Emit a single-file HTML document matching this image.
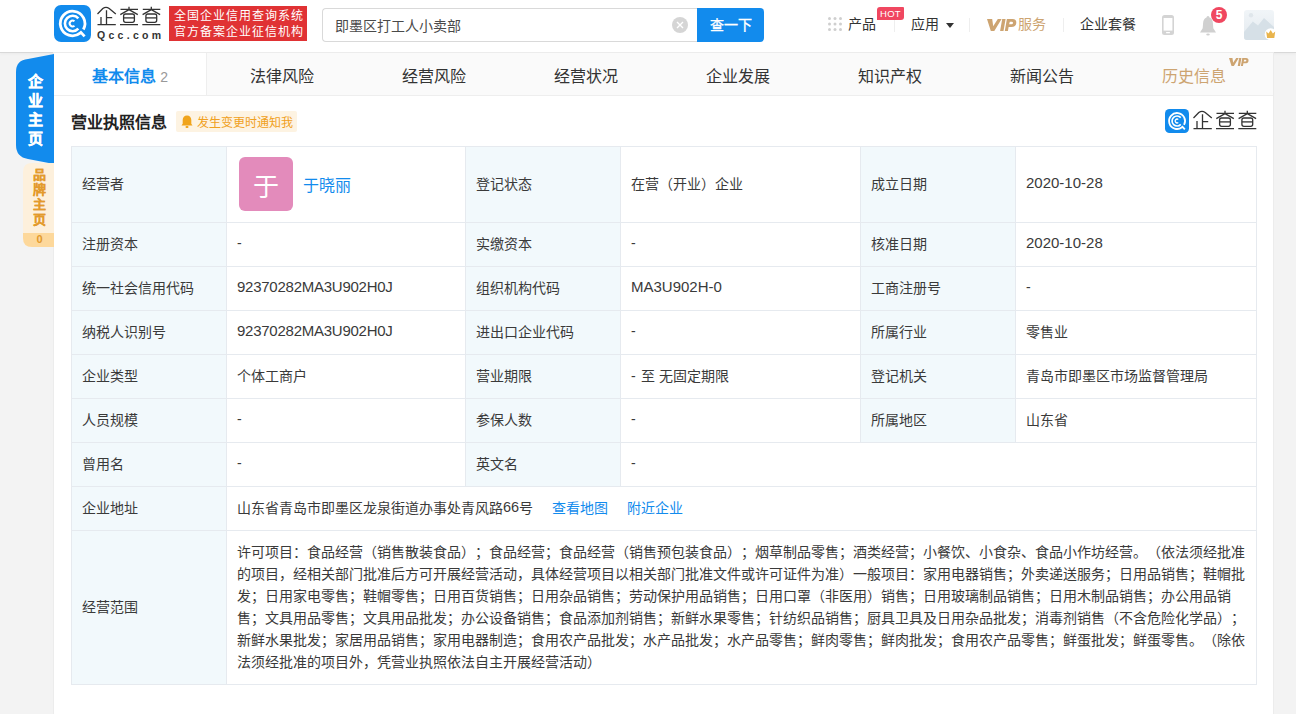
<!DOCTYPE html>
<html lang="zh-CN">
<head>
<meta charset="utf-8">
<style>
*{margin:0;padding:0;box-sizing:border-box}
html,body{width:1296px;height:714px;overflow:hidden}
body{background:#f3f3f3;font-family:"Liberation Sans",sans-serif;font-size:14px;color:#3a3a3a;position:relative;text-spacing-trim:space-all}
.abs{position:absolute}
.hdr{position:absolute;left:0;top:0;width:1296px;height:53px;background:#fff;border-bottom:1px solid #d8d8d8;box-shadow:0 1px 3px rgba(0,0,0,0.04)}
.panel{position:absolute;left:54px;top:53px;width:1219px;height:661px;background:#fff;box-shadow:0 0 0 1px #ececec}
.tabs{position:absolute;left:0;top:0;width:1219px;height:43px;background:#fafafa;border-bottom:1px solid #eee}
.tab{position:absolute;top:0;height:42px;line-height:47px;text-align:center;font-size:16px;color:#333}
.tab.on{background:#fff;color:#128bed;font-weight:bold;border-right:1px solid #eee}
.c{position:absolute;border:1px solid #e6eaef;display:flex;align-items:center;padding-left:10px;padding-bottom:4px;color:#3a3a3a;white-space:nowrap}
.lb{background:#f2f9fc}
.n{font-size:15px}
.cd{letter-spacing:-0.25px}
a{color:#128bed;text-decoration:none}
</style>
</head>
<body>
<div class="hdr">
  <!-- logo -->
  <svg class="abs" style="left:54px;top:5px" width="37" height="37" viewBox="0 0 37 37">
    <rect width="37" height="37" rx="7" fill="#128bed"/>
    <path d="M29.36 24.46 A12.3 12.3 0 1 0 26.17 28.19 M25.97 26.4 L30.6 31.37" fill="none" stroke="#fff" stroke-width="2.8"/>
    <path d="M24.32 13.35 A7.7 7.7 0 1 0 24.32 23.65" fill="none" stroke="#fff" stroke-width="2.6"/>
    <path d="M20.46 16.28 A2.9 2.9 0 1 0 20.46 20.72" fill="none" stroke="#fff" stroke-width="2"/>
  </svg>
  <svg class="abs" style="left:96px;top:5px" width="66" height="22" viewBox="0 0 66 22" fill="none" stroke="#333" stroke-width="1.3">
    <g id="lgq">
    <path d="M1.5 9 L6.8 3.6 Q10 1 13.2 3.6 L19.8 9"/>
    <path d="M10.5 5.2 V19.6 M10.5 12.6 H16.2 M5 12 V19.6 M1.5 19.6 H19.8"/>
    <path d="M33 1.8 V5 M24.5 4.4 H42 M33 4.6 L24.3 9.6 M33 4.6 L41.8 9.6 M24 19.6 H42"/>
    <rect x="27.6" y="9" width="10.8" height="8.3" rx="2"/>
    <path d="M27.6 12.9 H38.4"/>
    <path d="M55.3 1.8 V5 M46.8 4.4 H64.3 M55.3 4.6 L46.6 9.6 M55.3 4.6 L64.1 9.6 M46.3 19.6 H64.3"/>
    <rect x="49.9" y="9" width="10.8" height="8.3" rx="2"/>
    <path d="M49.9 12.9 H60.7"/>
    </g>
  </svg>
  <div class="abs" style="left:97px;top:29px;font-size:10.5px;color:#333;letter-spacing:3.3px;font-weight:bold;line-height:12px">Qcc.com</div>
  <div class="abs" style="left:169px;top:6px;width:138px;height:35px;background:#e03234;color:#fff;font-size:12px;line-height:16px;padding:2px 0 0 5px;letter-spacing:0.95px">全国企业信用查询系统<br>官方备案企业征信机构</div>
  <!-- search -->
  <div class="abs" style="left:322px;top:8px;width:376px;height:34px;border:1px solid #d9d9d9;border-right:none;border-radius:4px 0 0 4px"></div>
  <div class="abs" style="left:335px;top:9px;line-height:34px;font-size:14px;color:#4a4a4a">即墨区打工人小卖部</div>
  <svg class="abs" style="left:672px;top:17px" width="16" height="16" viewBox="0 0 16 16"><circle cx="8" cy="8" r="8" fill="#d5d5d5"/><path d="M5 5L11 11M11 5L5 11" stroke="#fff" stroke-width="1.4"/></svg>
  <div class="abs" style="left:697px;top:8px;width:67px;height:34px;background:#128bed;border-radius:0 4px 4px 0;color:#fff;font-size:14px;line-height:34px;text-align:center;-webkit-text-stroke:0.35px #fff">查一下</div>
  <!-- nav -->
  <svg class="abs" style="left:828px;top:17px" width="14" height="14" viewBox="0 0 14 14" fill="#cfcfcf">
    <circle cx="1.5" cy="1.5" r="1.5"/><circle cx="7" cy="1.5" r="1.5"/><circle cx="12.5" cy="1.5" r="1.5"/>
    <circle cx="1.5" cy="7" r="1.5"/><circle cx="7" cy="7" r="1.5"/><circle cx="12.5" cy="7" r="1.5"/>
    <circle cx="1.5" cy="12.5" r="1.5"/><circle cx="7" cy="12.5" r="1.5"/><circle cx="12.5" cy="12.5" r="1.5"/>
  </svg>
  <div class="abs" style="left:848px;top:14px;line-height:20px;font-size:14px;color:#333">产品</div>
  <div class="abs" style="left:894px;top:18px;width:1px;height:14px;background:#eee"></div>
  <div class="abs" style="left:877px;top:7px;width:27px;height:13px;background:#f04760;border-radius:3px 1px 3px 0;color:#fff;font-size:9.5px;line-height:13px;text-align:center;letter-spacing:0.3px">HOT</div>
  <div class="abs" style="left:911px;top:14px;line-height:20px;font-size:14px;color:#333">应用</div>
  <div class="abs" style="left:946px;top:23px;width:0;height:0;border-left:4px solid transparent;border-right:4px solid transparent;border-top:5px solid #333"></div>
  <div class="abs" style="left:969px;top:18px;width:1px;height:14px;background:#eee"></div>
  <svg class="abs" style="left:987px;top:19px" width="30" height="12" viewBox="0 0 30 12" fill="#cda471"><path id="vip" d="M0 0H5.2L6.2 7.2L10.8 0H14.6L7.3 12H3.8Z M15.2 0H18.6L16.5 12H13.1Z M19.9 0H25.5Q29.6 0 29.3 4Q29 8 24.2 8H21.6L20.9 12H17.8Z M22.8 2.8L22.1 5.2H24.4Q25.9 5.2 26 4Q26.1 2.8 24.8 2.8Z" fill-rule="evenodd"/></svg>
  <div class="abs" style="left:1018px;top:14px;line-height:20px;font-size:14px;color:#cda471">服务</div>
  <div class="abs" style="left:1063px;top:18px;width:1px;height:14px;background:#eee"></div>
  <div class="abs" style="left:1080px;top:14px;line-height:20px;font-size:14px;color:#333">企业套餐</div>
  <svg class="abs" style="left:1162px;top:15px" width="12" height="20" viewBox="0 0 12 20"><rect x="0" y="0" width="12" height="20" rx="2.5" fill="#d4d4d4"/><rect x="1.6" y="3" width="8.8" height="12.6" fill="#fff"/><rect x="4" y="16.9" width="4" height="1.3" rx="0.5" fill="#fff"/></svg>
  <svg class="abs" style="left:1199px;top:15px" width="18" height="22" viewBox="0 0 18 22"><path d="M9 1 C10 1 10.3 2 10.5 2.6 C12.6 3.3 13.7 5.3 13.9 8 L14.3 13.2 L17 17.5 H1 L3.7 13.2 L4.1 8 C4.3 5.3 5.4 3.3 7.5 2.6 C7.7 2 8 1 9 1 Z" fill="#d0d0d0"/><ellipse cx="9" cy="19.6" rx="1.8" ry="1" fill="#d0d0d0"/></svg>
  <div class="abs" style="left:1211px;top:7px;width:16px;height:16px;border-radius:8px;background:#f04760;color:#fff;font-size:12px;font-weight:bold;line-height:16px;text-align:center">5</div>
  <svg class="abs" style="left:1244px;top:10px" width="36" height="32" viewBox="0 0 36 32">
    <defs><linearGradient id="avg" x1="0" y1="0" x2="0" y2="1"><stop offset="0" stop-color="#f1f5f8"/><stop offset="1" stop-color="#e3eaef"/></linearGradient></defs>
    <rect width="30" height="30" rx="3" fill="url(#avg)"/>
    <circle cx="7" cy="5.2" r="2.2" fill="#dfe6eb"/>
    <path d="M0 22 L8.8 11.4 L14 15.5 L20 8 L30 17 V27 Q30 30 27 30 H3 Q0 30 0 27 Z" fill="#d6e0e7"/>
    <circle cx="26.7" cy="24.3" r="6" fill="#fff"/>
    <path d="M22.2 21.6 L24.5 23.6 L26.7 20 L28.9 23.6 L31.2 21.6 L30.3 28 H23.1 Z" fill="#e9b44c"/>
  </svg>
</div>

<div class="panel">
  <div class="tabs">
    <div class="tab on" style="left:0;width:153px">基本信息 <span style="font-size:14px;color:#999;font-weight:normal">2</span></div>
    <div class="tab" style="left:152px;width:152px">法律风险</div>
    <div class="tab" style="left:304px;width:152px">经营风险</div>
    <div class="tab" style="left:456px;width:152px">经营状况</div>
    <div class="tab" style="left:608px;width:152px">企业发展</div>
    <div class="tab" style="left:760px;width:152px">知识产权</div>
    <div class="tab" style="left:912px;width:152px">新闻公告</div>
    <div class="tab" style="left:1064px;width:152px;color:#cda471">历史信息</div>
    <svg class="abs" style="left:1175px;top:5px" width="20" height="8" viewBox="0 0 30 12" fill="#cda471"><use href="#vip"/></svg>
  </div>
</div>
<!-- side tabs -->
<svg class="abs" style="left:16px;top:54px" width="38" height="110" viewBox="0 0 38 110">
  <path d="M38 0 V110 L12 105 Q0 103 0 91 V18 Q0 6 12 5 Z" fill="#128bed"/>
</svg>
<div class="abs" style="left:16px;top:72px;width:38px;text-align:center;color:#fff;font-weight:bold;font-size:15px;line-height:19px;padding-left:1px;-webkit-text-stroke:0.4px #fff">企<br>业<br>主<br>页</div>
<svg class="abs" style="left:23px;top:162px" width="31" height="85" viewBox="0 0 31 85">
  <path d="M31 1 V85 H9 Q0 85 0 76 V10 Q0 1 9 1 Z" fill="#fdf0dc"/>
  <path d="M0 71 H31 V85 H9 Q0 85 0 76 Z" fill="#fdd89b"/>
</svg>
<div class="abs" style="left:22px;top:167px;width:32px;text-align:center;color:#e39a2c;font-weight:bold;font-size:13px;line-height:15px;padding-left:3px;-webkit-text-stroke:0.2px #e39a2c">品<br>牌<br>主<br>页</div>
<div class="abs" style="left:22px;top:233px;width:32px;text-align:center;color:#e39a2c;font-weight:bold;font-size:11px;line-height:13px;padding-left:3px">0</div>


<div class="abs" style="left:71px;top:112px;font-size:16px;font-weight:bold;color:#222;line-height:22px">营业执照信息</div>
<div class="abs" style="left:176px;top:111px;width:121px;height:21px;background:#fdf3e2;border-radius:2px"></div>
<svg class="abs" style="left:181px;top:115px" width="12" height="13" viewBox="0 0 12 13"><path d="M6 0.5c-2.6 0-4.3 2-4.3 4.6v3.6L0.5 10.5h11L10.3 8.7V5.1C10.3 2.5 8.6 0.5 6 0.5z" fill="#f0a41c"/><rect x="4.5" y="11" width="3" height="2" rx="1" fill="#f0a41c"/></svg>
<div class="abs" style="left:197px;top:113px;font-size:12px;line-height:21px;color:#f0a020">发生变更时通知我</div>

<!-- right logo -->
<svg class="abs" style="left:1165px;top:109px" width="24" height="24" viewBox="0 0 37 37">
  <rect width="37" height="37" rx="7" fill="#128bed"/>
  <path d="M29.36 24.46 A12.3 12.3 0 1 0 26.17 28.19 M25.97 26.4 L30.6 31.37" fill="none" stroke="#fff" stroke-width="2.8"/>
  <path d="M24.32 13.35 A7.7 7.7 0 1 0 24.32 23.65" fill="none" stroke="#fff" stroke-width="2.6"/>
  <path d="M20.46 16.28 A2.9 2.9 0 1 0 20.46 20.72" fill="none" stroke="#fff" stroke-width="2"/>
</svg>
<svg class="abs" style="left:1192px;top:109px" width="66" height="22" viewBox="0 0 66 22" fill="none" stroke="#333" stroke-width="1.3"><use href="#lgq"/></svg>

<!-- table -->
<div id="tbl">
<div class="c lb" style="left:71px;top:146px;width:156px;height:77px">经营者</div>
<div class="c" style="left:226px;top:146px;width:240px;height:77px;padding-left:12px;padding-bottom:2px">
  <div style="width:54px;height:54px;border-radius:6px;background:#e38bbb;color:#fff;font-size:26px;line-height:61px;text-align:center;overflow:hidden">于</div>
  <a style="margin-left:10px;font-size:16px">于晓丽</a>
</div>
<div class="c lb" style="left:465px;top:146px;width:156px;height:77px">登记状态</div>
<div class="c" style="left:620px;top:146px;width:241px;height:77px">在营（开业）企业</div>
<div class="c lb" style="left:860px;top:146px;width:156px;height:77px">成立日期</div>
<div class="c n" style="left:1015px;top:146px;width:242px;height:77px">2020-10-28</div>

<div class="c lb" style="left:71px;top:222px;width:156px;height:45px">注册资本</div>
<div class="c" style="left:226px;top:222px;width:240px;height:45px">-</div>
<div class="c lb" style="left:465px;top:222px;width:156px;height:45px">实缴资本</div>
<div class="c" style="left:620px;top:222px;width:241px;height:45px">-</div>
<div class="c lb" style="left:860px;top:222px;width:156px;height:45px">核准日期</div>
<div class="c n" style="left:1015px;top:222px;width:242px;height:45px">2020-10-28</div>

<div class="c lb" style="left:71px;top:266px;width:156px;height:45px">统一社会信用代码</div>
<div class="c n cd" style="left:226px;top:266px;width:240px;height:45px">92370282MA3U902H0J</div>
<div class="c lb" style="left:465px;top:266px;width:156px;height:45px">组织机构代码</div>
<div class="c n" style="left:620px;top:266px;width:241px;height:45px">MA3U902H-0</div>
<div class="c lb" style="left:860px;top:266px;width:156px;height:45px">工商注册号</div>
<div class="c" style="left:1015px;top:266px;width:242px;height:45px">-</div>

<div class="c lb" style="left:71px;top:310px;width:156px;height:45px">纳税人识别号</div>
<div class="c n cd" style="left:226px;top:310px;width:240px;height:45px">92370282MA3U902H0J</div>
<div class="c lb" style="left:465px;top:310px;width:156px;height:45px">进出口企业代码</div>
<div class="c" style="left:620px;top:310px;width:241px;height:45px">-</div>
<div class="c lb" style="left:860px;top:310px;width:156px;height:45px">所属行业</div>
<div class="c" style="left:1015px;top:310px;width:242px;height:45px">零售业</div>

<div class="c lb" style="left:71px;top:354px;width:156px;height:45px">企业类型</div>
<div class="c" style="left:226px;top:354px;width:240px;height:45px">个体工商户</div>
<div class="c lb" style="left:465px;top:354px;width:156px;height:45px">营业期限</div>
<div class="c" style="left:620px;top:354px;width:241px;height:45px;word-spacing:1px">- 至 无固定期限</div>
<div class="c lb" style="left:860px;top:354px;width:156px;height:45px">登记机关</div>
<div class="c" style="left:1015px;top:354px;width:242px;height:45px">青岛市即墨区市场监督管理局</div>

<div class="c lb" style="left:71px;top:398px;width:156px;height:45px">人员规模</div>
<div class="c" style="left:226px;top:398px;width:240px;height:45px">-</div>
<div class="c lb" style="left:465px;top:398px;width:156px;height:45px">参保人数</div>
<div class="c" style="left:620px;top:398px;width:241px;height:45px">-</div>
<div class="c lb" style="left:860px;top:398px;width:156px;height:45px">所属地区</div>
<div class="c" style="left:1015px;top:398px;width:242px;height:45px">山东省</div>

<div class="c lb" style="left:71px;top:442px;width:156px;height:45px">曾用名</div>
<div class="c" style="left:226px;top:442px;width:240px;height:45px">-</div>
<div class="c lb" style="left:465px;top:442px;width:156px;height:45px">英文名</div>
<div class="c" style="left:620px;top:442px;width:637px;height:45px">-</div>

<div class="c lb" style="left:71px;top:486px;width:156px;height:45px">企业地址</div>
<div class="c" style="left:226px;top:486px;width:1031px;height:45px">山东省青岛市即墨区龙泉街道办事处青风路<span style="font-size:14.5px">66</span>号<a style="margin-left:19px">查看地图</a><a style="margin-left:19px">附近企业</a></div>

<div class="c lb" style="left:71px;top:530px;width:156px;height:155px">经营范围</div>
<div class="c" style="left:226px;top:530px;width:1031px;height:155px;line-height:22px;white-space:nowrap;align-items:flex-start;padding-top:10px;padding-bottom:0">
<div>许可项目：食品经营（销售散装食品）；食品经营；食品经营（销售预包装食品）；烟草制品零售；酒类经营；小餐饮、小食杂、食品小作坊经营。（依法须经批准<br>的项目，经相关部门批准后方可开展经营活动，具体经营项目以相关部门批准文件或许可证件为准）一般项目：家用电器销售；外卖递送服务；日用品销售；鞋帽批<br>发；日用家电零售；鞋帽零售；日用百货销售；日用杂品销售；劳动保护用品销售；日用口罩（非医用）销售；日用玻璃制品销售；日用木制品销售；办公用品销<br>售；文具用品零售；文具用品批发；办公设备销售；食品添加剂销售；新鲜水果零售；针纺织品销售；厨具卫具及日用杂品批发；消毒剂销售（不含危险化学品）；<br>新鲜水果批发；家居用品销售；家用电器制造；食用农产品批发；水产品批发；水产品零售；鲜肉零售；鲜肉批发；食用农产品零售；鲜蛋批发；鲜蛋零售。（除依<br>法须经批准的项目外，凭营业执照依法自主开展经营活动）</div>
</div>
</div>
</body>
</html>
